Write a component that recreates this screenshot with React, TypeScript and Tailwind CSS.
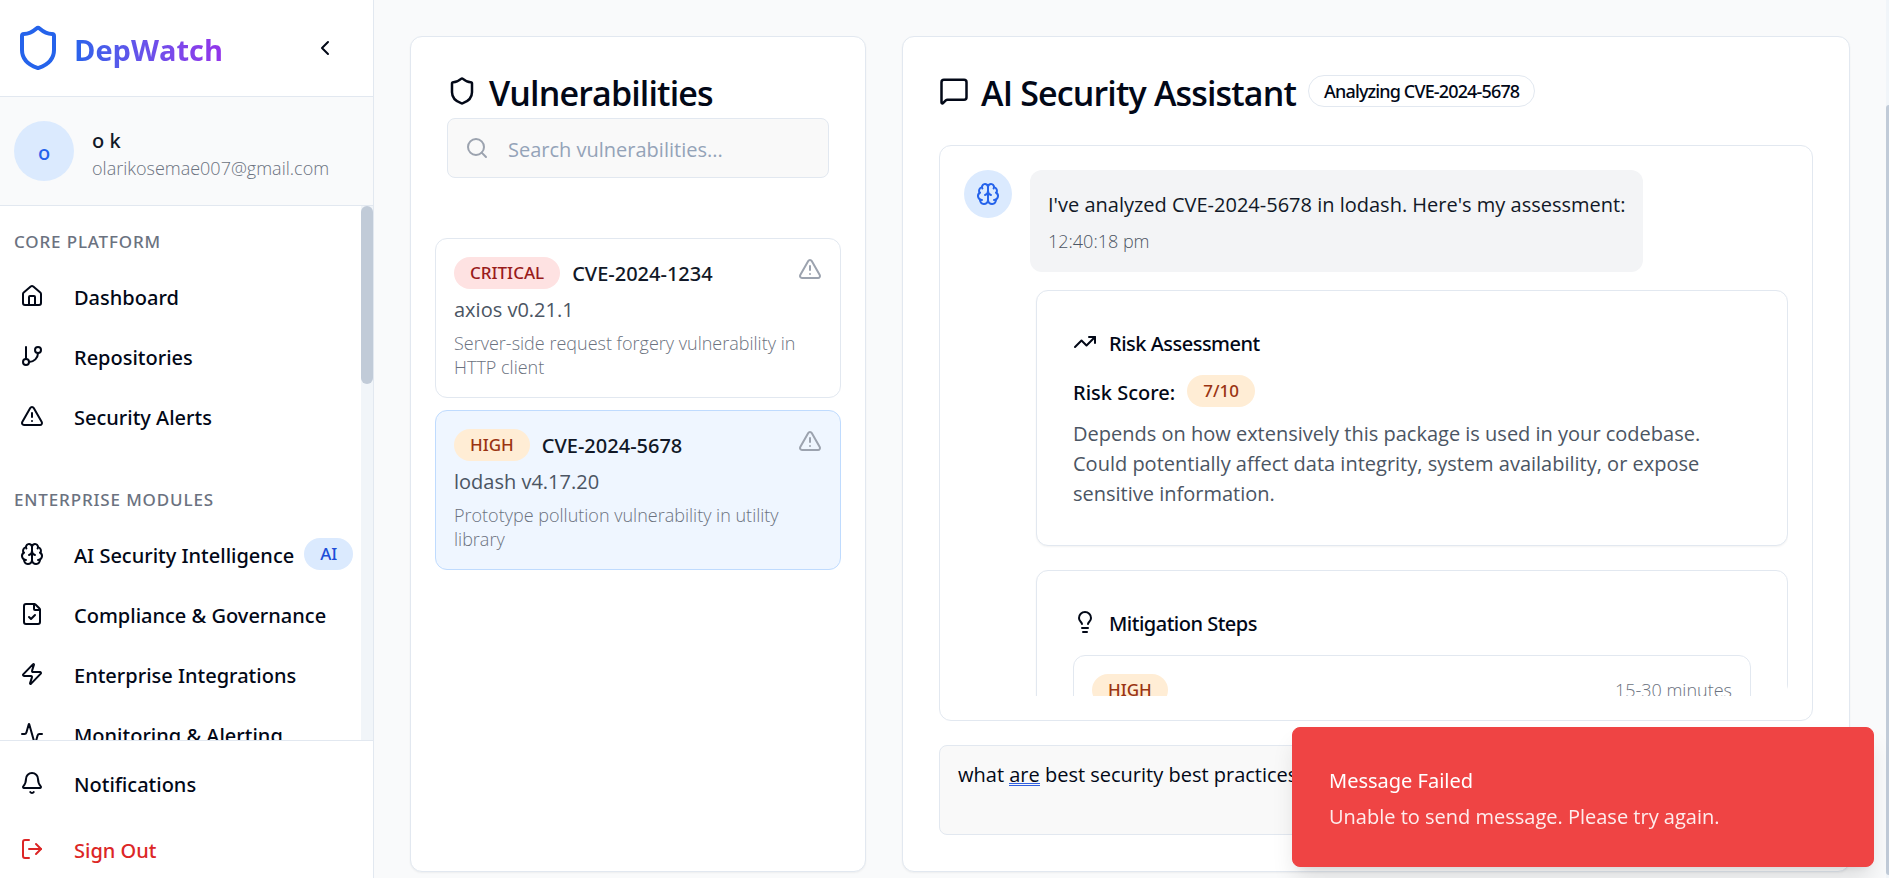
import { useState, type ReactNode } from "react";
import {
  Activity,
  Bell,
  Brain,
  ChevronLeft,
  FileCheck,
  GitBranch,
  House,
  Lightbulb,
  LogOut,
  MessageSquare,
  Search,
  Shield,
  TrendingUp,
  TriangleAlert,
  Zap,
  type LucideIcon,
} from "lucide-react";

type NavEntry = { label: string; icon: LucideIcon; badge?: string };

const sections: { title: string; items: NavEntry[] }[] = [
  {
    title: "Core Platform",
    items: [
      { label: "Dashboard", icon: House },
      { label: "Repositories", icon: GitBranch },
      { label: "Security Alerts", icon: TriangleAlert },
    ],
  },
  {
    title: "Enterprise Modules",
    items: [
      { label: "AI Security Intelligence", icon: Brain, badge: "AI" },
      { label: "Compliance & Governance", icon: FileCheck },
      { label: "Enterprise Integrations", icon: Zap },
      { label: "Monitoring & Alerting", icon: Activity },
    ],
  },
];

const vulnerabilities = [
  {
    id: "CVE-2024-1234",
    severity: "CRITICAL",
    pkg: "axios v0.21.1",
    description: "Server-side request forgery vulnerability in HTTP client",
  },
  {
    id: "CVE-2024-5678",
    severity: "HIGH",
    pkg: "lodash v4.17.20",
    description: "Prototype pollution vulnerability in utility library",
  },
];

const tones = {
  red: "border-transparent bg-[#fee2e2] text-[17px] text-[#991b1b]",
  orange: "border-transparent bg-[#ffedd5] text-[17px] text-[#9a3412]",
  blue: "border-transparent bg-[#dbeafe] text-[17px] text-[#1d4ed8]",
  outline: "border-[#e2e8f0] text-[18px] text-[#020817]",
};

function Badge({ tone, children }: { tone: keyof typeof tones; children: ReactNode }) {
  return (
    <span
      className={`inline-flex h-8 shrink-0 items-center rounded-full border px-[15px] font-['Noto_Sans',sans-serif] leading-6 font-medium whitespace-nowrap ${tones[tone]}`}
    >
      {children}
    </span>
  );
}

function NavItem({ label, icon: Icon, badge }: NavEntry) {
  return (
    <a href="#" className="flex h-[60px] items-center pr-2 pl-5 text-[#020817]">
      <Icon className="size-6 shrink-0" />
      <span className="ml-[30px] pt-[3px] whitespace-nowrap">{label}</span>
      {badge && (
        <span className="ml-2.5 flex">
          <Badge tone="blue">{badge}</Badge>
        </span>
      )}
    </a>
  );
}

function Sidebar() {
  return (
    <aside className="flex w-[374px] shrink-0 flex-col border-r border-[#e2e8f0] bg-white font-['Noto_Sans',sans-serif] text-[20px] leading-[30px] font-medium">
      <div className="flex h-[97px] shrink-0 items-center border-b border-[#e2e8f0] pr-9 pl-3.5">
        <Shield className="size-12 text-[#2563eb]" />
        <span className="ml-3 bg-linear-to-r from-[#2563eb] to-[#9333ea] bg-clip-text pt-[3px] font-['Open_Sans',sans-serif] text-[29px] leading-9 font-bold text-transparent">
          DepWatch
        </span>
        <button type="button" aria-label="Collapse sidebar" className="ml-auto text-[#020817]">
          <ChevronLeft className="size-6" />
        </button>
      </div>

      <div className="flex shrink-0 items-center gap-[18px] border-b border-[#e2e8f0] bg-[#f9fafb] px-3.5 py-6">
        <div className="flex size-[60px] items-center justify-center rounded-full bg-[#dbeafe] pt-[3px] text-[#2563eb]">
          o
        </div>
        <div className="min-w-0 pt-[3px]">
          <p className="text-[#111827]">o k</p>
          <p className="font-['Open_Sans',sans-serif] text-[18px] leading-6 font-light text-[#6b7280]">
            olarikosemae007@gmail.com
          </p>
        </div>
      </div>

      <div className="flex min-h-0 flex-1">
        <nav className="flex min-w-0 flex-1 flex-col gap-[42px] overflow-hidden pt-6">
          {sections.map((section) => (
            <div key={section.title}>
              <h3 className="mb-3 pl-3.5 text-[17px] leading-6 tracking-wider text-[#6b7280] uppercase">
                {section.title}
              </h3>
              {section.items.map((item) => (
                <NavItem key={item.label} {...item} />
              ))}
            </div>
          ))}
        </nav>
        <div className="w-3 bg-[#f1f5f9]">
          <div className="h-1/3 rounded-full bg-[#c1cbd8]" />
        </div>
      </div>

      <div className="flex shrink-0 flex-col gap-[18px] border-t border-[#e2e8f0] pt-[18px] pb-[5px]">
        <button type="button" className="flex h-12 items-center gap-[30px] pl-5 text-[#020817]">
          <Bell className="size-6" />
          <span className="pt-[3px]">Notifications</span>
        </button>
        <button type="button" className="flex h-12 items-center gap-[30px] pl-5 text-[#dc2626]">
          <LogOut className="size-6" />
          <span className="pt-[3px]">Sign Out</span>
        </button>
      </div>
    </aside>
  );
}

function VulnerabilityPanel() {
  const [selected, setSelected] = useState("CVE-2024-5678");
  return (
    <section className="rounded-xl border border-[#e2e8f0] bg-white shadow-xs">
      <div className="p-9">
        <h2 className="flex h-9 items-center gap-3 text-[34px] leading-9 font-semibold tracking-tight">
          <Shield className="size-[30px] shrink-0" />
          <span className="pt-1">Vulnerabilities</span>
        </h2>
        <div className="relative mt-[9px]">
          <Search className="absolute top-[18px] left-[18px] size-6 text-[#9ca3af]" />
          <input
            type="text"
            aria-label="Search vulnerabilities"
            placeholder="Search vulnerabilities..."
            className="h-[60px] w-full rounded-lg border border-[#e2e8f0] bg-[#f9f9f9] pt-0.5 pr-4 pl-[60px] placeholder:text-[#94a3b8]"
          />
        </div>
      </div>
      <div className="flex flex-col gap-3 p-6">
        {vulnerabilities.map((v) => (
          <button
            key={v.id}
            type="button"
            onClick={() => setSelected(v.id)}
            className={`flex items-start rounded-xl border p-[18px] text-left ${
              selected === v.id ? "border-[#bfdbfe] bg-[#eff6ff]" : "border-[#e2e8f0] bg-white"
            }`}
          >
            <span className="flex min-w-0 flex-1 flex-col gap-1.5">
              <span className="flex items-center gap-3">
                <Badge tone={v.severity === "CRITICAL" ? "red" : "orange"}>{v.severity}</Badge>
                <span className="pt-0.5 font-['Noto_Sans',sans-serif] font-medium text-[#111827]">{v.id}</span>
              </span>
              <span className="text-[#4b5563]">{v.pkg}</span>
              <span className="text-[18px] leading-6 font-light text-[#6b7280]">{v.description}</span>
            </span>
            <TriangleAlert className="size-6 shrink-0 text-[#9ca3af]" />
          </button>
        ))}
      </div>
    </section>
  );
}

function ReportCard({ icon: Icon, title, children }: { icon: LucideIcon; title: string; children: ReactNode }) {
  return (
    <article className="shrink-0 rounded-xl border border-[#e2e8f0] bg-white p-9 shadow-xs">
      <h3 className="mb-[18px] flex h-[30px] items-center gap-3 font-['Noto_Sans',sans-serif] font-medium tracking-tight">
        <Icon className="size-6" />
        <span className="pt-[3px]">{title}</span>
      </h3>
      {children}
    </article>
  );
}

function AssistantPanel() {
  const [draft, setDraft] = useState("what are best security best practices");
  return (
    <section className="col-span-2 flex min-h-0 flex-col rounded-xl border border-[#e2e8f0] bg-white p-9 shadow-xs">
      <h2 className="flex h-9 shrink-0 items-center gap-3 text-[34px] leading-9 font-semibold tracking-tight whitespace-nowrap">
        <MessageSquare className="size-[30px] shrink-0" />
        <span className="pt-1">AI Security Assistant</span>
        <Badge tone="outline">Analyzing CVE-2024-5678</Badge>
      </h2>

      <div className="mt-9 flex min-h-0 flex-1 flex-col rounded-xl border border-[#e2e8f0] p-6">
        <div className="flex min-h-0 flex-1 flex-col gap-[18px] overflow-hidden rounded-r-xl">
          <div className="flex shrink-0 items-start gap-[18px]">
            <div className="flex size-12 items-center justify-center rounded-full bg-[#dbeafe] text-[#2563eb]">
              <Brain className="size-6" />
            </div>
            <div className="rounded-xl bg-[#f3f4f6] px-[18px] pt-5 pb-4 text-[#111827]">
              <p>I've analyzed CVE-2024-5678 in lodash. Here's my assessment:</p>
              <p className="mt-1.5 text-[18px] font-light text-[#4b5563]">12:40:18 pm</p>
            </div>
          </div>

          <div className="ml-[72px] flex flex-col gap-6">
            <ReportCard icon={TrendingUp} title="Risk Assessment">
              <div className="mb-3 flex h-8 items-center gap-3 font-['Noto_Sans',sans-serif] font-medium">
                <span className="pt-[3px]">Risk Score:</span>
                <Badge tone="orange">7/10</Badge>
              </div>
              <p className="text-[#4b5563]">
                Depends on how extensively this package is used in your codebase. Could potentially affect data
                integrity, system availability, or expose sensitive information.
              </p>
            </ReportCard>
            <ReportCard icon={Lightbulb} title="Mitigation Steps">
              <div className="flex items-center justify-between rounded-xl border border-[#e2e8f0] p-[18px]">
                <Badge tone="orange">HIGH</Badge>
                <span className="text-[18px] font-light text-[#6b7280]">15-30 minutes</span>
              </div>
            </ReportCard>
          </div>
        </div>
      </div>

      <div className="relative mt-6 flex shrink-0">
        <textarea
          aria-label="Message"
          value={draft}
          spellCheck={false}
          onChange={(e) => setDraft(e.target.value)}
          className="h-[90px] w-full resize-none rounded-lg border border-[#e2e8f0] bg-[#f9f9f9] px-[18px] py-3.5"
        />
        {/* Grammar marker over the second word of the draft */}
        <div aria-hidden="true" className="pointer-events-none absolute top-[15px] left-[19px] text-transparent">
          what <span className="inline-block h-[26px] border-b-[3px] border-double border-[#2f5fe0] align-top">are</span>
        </div>
      </div>
    </section>
  );
}

function Toast() {
  return (
    <div
      role="alert"
      className="fixed right-[15px] bottom-[11px] w-[582px] rounded-lg border border-[#ef4444] bg-[#ef4444] px-9 pt-[38px] pb-[34px] text-white shadow-[0_15px_24px_-4px_rgba(0,0,0,0.12),0_6px_9px_-6px_rgba(0,0,0,0.1)]"
    >
      <p className="font-['Noto_Sans',sans-serif]">Message Failed</p>
      <p className="mt-1.5 opacity-90">Unable to send message. Please try again.</p>
    </div>
  );
}

export default function App() {
  return (
    <div className="flex h-screen overflow-hidden bg-[#f9fafb] font-['Open_Sans',sans-serif] text-[20px] leading-[30px] text-[#020817]">
      <Sidebar />
      <main className="grid min-w-0 flex-1 grid-cols-3 grid-rows-[minmax(0,1fr)] gap-9 px-9 pt-9 pb-1.5">
        <VulnerabilityPanel />
        <AssistantPanel />
      </main>
      <div className="w-[3px] shrink-0 bg-[#f1f5f9] pt-[105px] pb-[3px]">
        <div className="h-full rounded-l-full bg-[#c1cbd8]" />
      </div>
      <Toast />
    </div>
  );
}
